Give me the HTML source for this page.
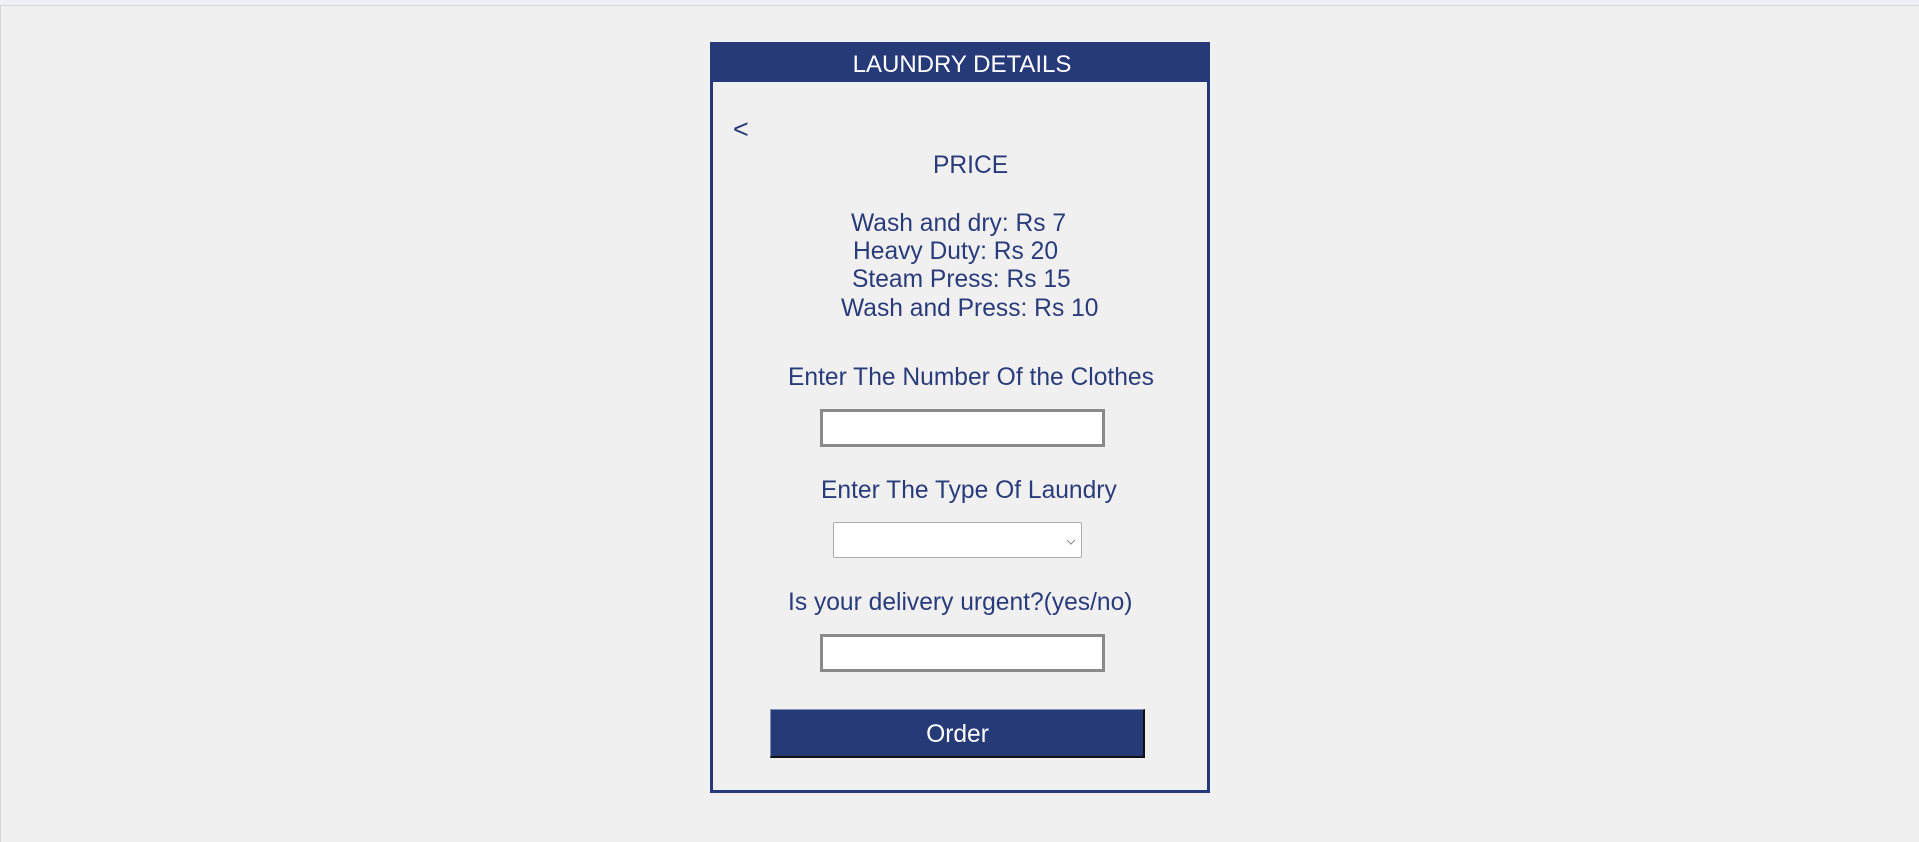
<!DOCTYPE html>
<html><head><style>
html,body{margin:0;padding:0}
body{width:1919px;height:842px;background:#f0f0f0;position:relative;overflow:hidden;font-family:"Liberation Sans",Arial,sans-serif;color:#2a3b7c}
.t{position:absolute;font-size:24.6px;line-height:25px;white-space:nowrap}
.box{position:absolute;background:#fff;box-sizing:border-box}
</style></head><body>
<div style="position:absolute;left:0;top:0;width:1919px;height:5px;background:#eef1f9;border-bottom:1px solid #d6d6d6"></div>
<div style="position:absolute;left:0;top:6px;width:1px;height:836px;background:#d6d6d6"></div>
<div style="position:absolute;left:710px;top:42px;width:500px;height:751px;box-sizing:border-box;border:3px solid #273a78"></div>
<div style="position:absolute;left:710px;top:42px;width:500px;height:40px;background:#273a78"></div>
<div class="t" style="left:712px;width:500px;text-align:center;top:52px;color:#fff;font-size:24px">LAUNDRY DETAILS</div>
<div class="t" style="left:733px;top:117px;font-size:27px">&lt;</div>
<div class="t" style="left:933px;top:153px">PRICE</div>
<div class="t" style="left:851px;top:211px">Wash and dry: Rs 7</div>
<div class="t" style="left:853px;top:239px">Heavy Duty: Rs 20</div>
<div class="t" style="left:852px;top:267px">Steam Press: Rs 15</div>
<div class="t" style="left:841px;top:296px">Wash and Press: Rs 10</div>
<div class="t" style="left:788px;top:365px">Enter The Number Of the Clothes</div>
<div class="box" style="left:820px;top:409px;width:285px;height:38px;border:3px solid #8a8a8a"></div>
<div class="t" style="left:821px;top:478px">Enter The Type Of Laundry</div>
<div class="box" style="left:833px;top:522px;width:249px;height:36px;border:1px solid #acacac;border-radius:2px">
<svg style="position:absolute;left:232px;top:16px" width="10" height="6" viewBox="0 0 10 6"><path d="M1 1 L5 5 L9 1" fill="none" stroke="#888" stroke-width="1"/></svg></div>
<div class="t" style="left:788px;top:590px">Is your delivery urgent?(yes/no)</div>
<div class="box" style="left:820px;top:634px;width:285px;height:38px;border:3px solid #8a8a8a"></div>
<div style="position:absolute;left:770px;top:709px;width:375px;height:49px;box-sizing:border-box;background:#273a78;border-top:1px solid #8090b8;border-left:1px solid #8090b8;border-right:2px solid #111;border-bottom:2px solid #111"></div>
<div class="t" style="left:770px;width:375px;text-align:center;top:722px;color:#fff">Order</div>
</body></html>
